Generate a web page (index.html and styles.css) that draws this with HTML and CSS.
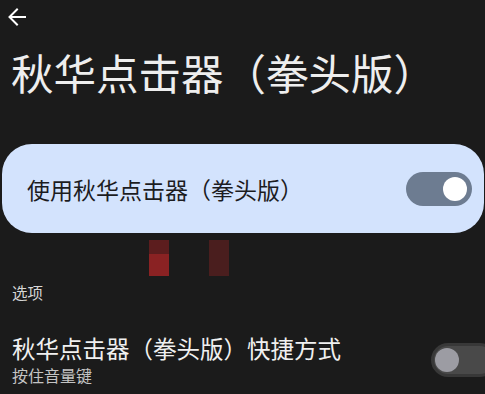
FILE: index.html
```html
<!DOCTYPE html>
<html lang="zh-CN">
<head>
<meta charset="utf-8">
<link rel="stylesheet" href="styles.css">
</head>
<body>
<div class="screen">
  <div class="topbar">
    <svg class="back" width="20" height="20" viewBox="0 0 20 20">
      <path d="M18 10H3M10 2.5L2.5 10L10 17.5" fill="none" stroke="#ffffff" stroke-width="2" stroke-linecap="square"/>
    </svg>
  </div>
  <h1 class="title">秋华点击器（拳头版）</h1>
  <div class="card">
    <span class="card-label">使用秋华点击器（拳头版）</span>
    <div class="switch switch-on"><div class="thumb"></div></div>
  </div>
  <div class="marks">
    <div class="mark mark-a"></div>
    <div class="mark mark-b"></div>
  </div>
  <div class="section">选项</div>
  <div class="item">
    <div class="item-text">
      <div class="item-title">秋华点击器（拳头版）快捷方式</div>
      <div class="item-sub">按住音量键</div>
    </div>
    <div class="switch switch-off"><div class="thumb"></div></div>
  </div>
</div>
</body>
</html>
```

FILE: styles.css
```css
html, body {
  margin: 0;
  padding: 0;
  background: #1b1b1b;
}
body {
  font-family: "Noto Sans CJK SC", "Noto Sans", sans-serif;
  color: #ececec;
}
.screen {
  width: 485px;
  height: 394px;
  overflow: hidden;
  display: flex;
  flex-direction: column;
}
.topbar {
  height: 32px;
  display: flex;
  align-items: flex-start;
  padding: 7px 0 0 7px;
  box-sizing: border-box;
}
.back {
  display: block;
}
.title {
  margin: 18px 0 0 11px;
  font-size: 42.5px;
  line-height: 43px;
  font-weight: 400;
  color: #eeeeee;
}
.card {
  margin: 51px 1px 0 2px;
  height: 89px;
  border-radius: 30px;
  background: #d3e3fd;
  display: flex;
  align-items: center;
  justify-content: space-between;
  padding: 0 12px 0 25px;
}
.card-label {
  font-size: 23px;
  line-height: 30px;
  color: #1c1c1f;
}
.switch {
  width: 66px;
  height: 34px;
  border-radius: 17px;
  box-sizing: border-box;
  display: flex;
  align-items: center;
  flex-shrink: 0;
}
.switch-on {
  background: #6d7c91;
  justify-content: flex-end;
  padding-right: 5px;
}
.switch-on .thumb {
  width: 24px;
  height: 24px;
  border-radius: 50%;
  background: #ffffff;
}
.switch-off {
  background: #494949;
  border: 3px solid #383838;
  padding-left: 1px;
  margin-right: -12px;
}
.switch-off .thumb {
  width: 24px;
  height: 24px;
  border-radius: 50%;
  background: #9c9ca3;
}
.marks {
  display: flex;
  gap: 40px;
  margin: 7px 0 0 149px;
  height: 36px;
}
.mark {
  width: 20px;
  height: 36px;
}
.mark-a {
  background: linear-gradient(#5c1d1e 0 40%, #8a2223 40% 100%);
}
.mark-b {
  background: #4a1e1e;
}
.section {
  margin: 6px 0 0 12px;
  font-size: 15.5px;
  line-height: 20px;
  color: #d6d6d6;
}
.item {
  margin: 33px 0 0 12px;
  display: flex;
  align-items: center;
  justify-content: space-between;
}
.item-title {
  font-size: 23.5px;
  line-height: 27px;
  color: #f0f0f0;
}
.item-sub {
  margin-top: 3px;
  font-size: 16px;
  line-height: 20px;
  color: #c4c4c4;
}
```
